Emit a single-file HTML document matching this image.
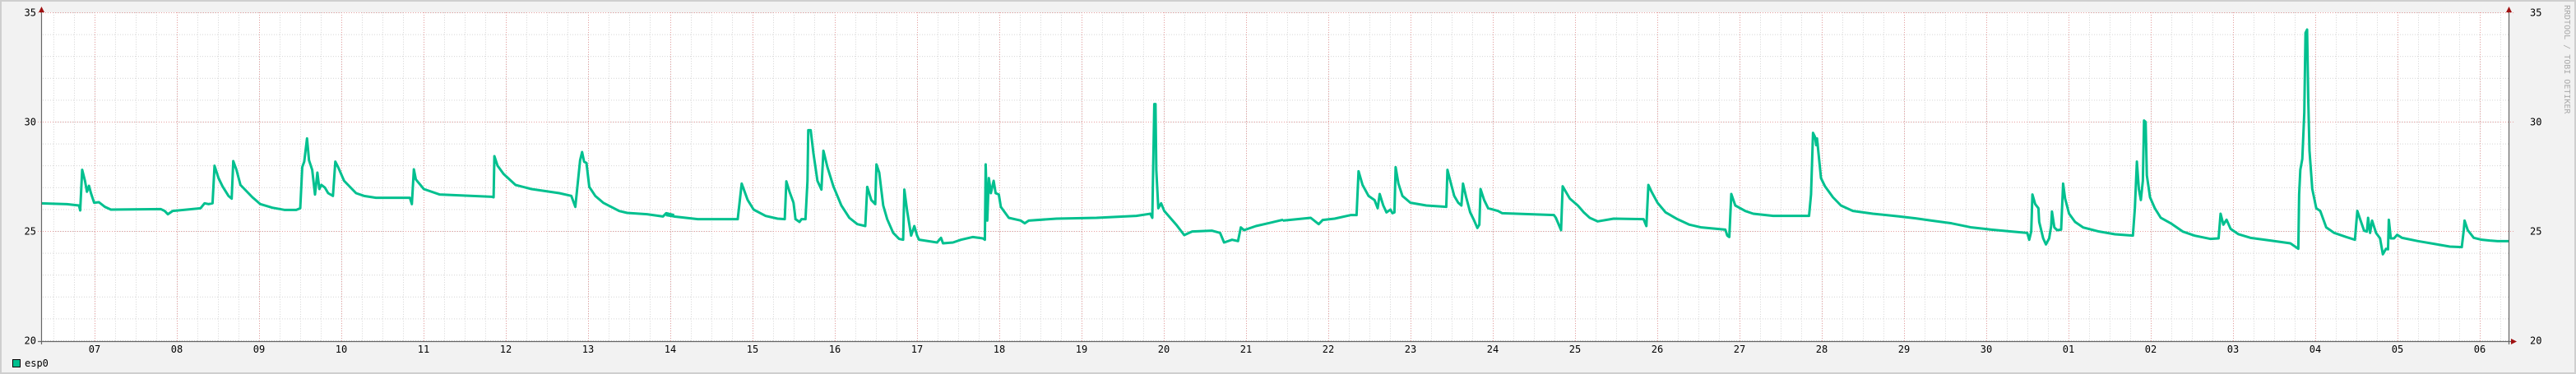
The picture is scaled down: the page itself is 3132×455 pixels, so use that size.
<!DOCTYPE html>
<html><head><meta charset="utf-8"><style>
html,body{margin:0;padding:0;background:#f2f2f2;}
svg{display:block;}
text{font-family:"DejaVu Sans Mono","Liberation Mono",monospace;}
</style></head><body>
<svg width="3132" height="455" viewBox="0 0 3132 455" xmlns="http://www.w3.org/2000/svg">
<defs>
<pattern id="mi" patternUnits="userSpaceOnUse" x="15" y="15" width="25" height="26.6">
<line x1="0.5" y1="0" x2="0.5" y2="26.6" stroke="#d4d4d4" stroke-width="1" stroke-dasharray="1,2"/>
<line x1="0" y1="0.5" x2="25" y2="0.5" stroke="#d4d4d4" stroke-width="1" stroke-dasharray="1,2"/>
</pattern>
<pattern id="ma" patternUnits="userSpaceOnUse" x="15" y="0" width="100" height="455">
<line x1="0.5" y1="0" x2="0.5" y2="455" stroke="#e8a0a0" stroke-width="1" stroke-dasharray="1,2"/>
</pattern>
</defs>
<rect x="0" y="0" width="3132" height="455" fill="#f2f2f2"/>
<rect x="1" y="1" width="3130" height="453" fill="none" stroke="#cfcfcf" stroke-width="2"/>
<rect x="51" y="15" width="2999" height="400" fill="#fff"/>
<rect x="51" y="15" width="2999" height="400" fill="url(#mi)"/>
<rect x="51" y="15" width="2999" height="400" fill="url(#ma)"/>
<g stroke="#e8a0a0" stroke-width="1" stroke-dasharray="1,2">
<line x1="46" y1="15.5" x2="3056" y2="15.5"/>
<line x1="46" y1="148.5" x2="3056" y2="148.5"/>
<line x1="46" y1="281.5" x2="3056" y2="281.5"/>
</g>
<g transform="translate(50,140) scale(0.4847,0.33333)" fill="none" stroke="#00c08f" stroke-width="3" stroke-linejoin="round" vector-effect="non-scaling-stroke">
<polyline vector-effect="non-scaling-stroke" points="0,322 65,325 95,330 98,348 103,200 110,240 115,280 120,258 125,285 133,320 145,318 160,335 175,345 300,343 310,350 318,362 330,350 400,340 410,322 420,325 430,322 435,185 445,230 455,260 470,295 478,305 482,168 490,200 500,255 510,270 530,300 550,325 580,338 610,346 640,346 650,340 655,190 660,170 667,85 672,165 680,200 687,290 693,210 698,270 703,255 712,265 720,285 732,295 738,170 745,190 760,240 790,285 810,295 840,302 925,302 930,325 935,198 940,235 960,270 1000,290 1130,298 1135,300 1137,150 1145,185 1160,215 1190,255 1230,270 1300,285 1330,295 1340,335 1352,165 1357,135 1362,170 1368,175 1375,262 1390,295 1410,320 1450,350 1470,357 1520,362 1560,370 1568,358 1588,365"/>
</g>
<g transform="translate(800,140) scale(0.4847,0.33333)" fill="none" stroke="#00c08f">
<polyline vector-effect="non-scaling-stroke" stroke-width="3" stroke-linejoin="round" points="20,365 40,370 100,380 200,380 210,250 225,310 240,345 270,368 300,378 318,380 322,242 330,280 340,320 345,380 355,390 360,380 370,380 375,240 377,55 383,55 390,140 400,240 410,272 415,130 425,190 440,260 460,330 480,375 500,398 520,405 525,262 535,310 545,325 548,180 555,210 565,330 575,380 590,430 605,452 615,455 618,272 625,350 635,440 643,405 650,440 655,455 700,465 710,448 715,468 740,465 760,455 790,445 815,450 820,455 822,180 826,385 830,230 835,285 842,240 847,285 855,290 860,335 880,375 910,385 920,395 930,385 1000,378 1100,375 1200,368 1235,360 1240,375 1242,205 1245,-40 1248,-40 1250,200 1255,340 1262,322 1270,350 1300,400 1320,438 1340,425 1390,422 1410,430 1420,465 1440,455 1455,460 1462,410 1470,420 1500,405 1530,395 1568,382"/>
</g>
<g transform="translate(1550,140) scale(0.4847,0.33333)" fill="none" stroke="#00c08f">
<polyline vector-effect="non-scaling-stroke" stroke-width="3" stroke-linejoin="round" points="20,385 90,375 110,398 120,383 150,378 190,365 205,365 210,205 220,255 235,295 250,310 258,340 263,288 272,330 280,355 290,345 295,358 300,355 303,190 310,250 320,295 340,320 380,330 430,335 433,200 440,240 450,295 460,320 468,330 472,250 480,300 490,355 500,385 508,412 513,400 516,270 525,310 535,340 560,350 570,358 700,365 705,375 718,420 722,260 730,280 740,305 760,330 775,355 790,375 810,388 850,378 925,380 932,405 937,255 945,280 960,320 980,355 1010,380 1040,400 1070,410 1130,418 1135,440 1140,445 1145,288 1155,330 1180,350 1200,360 1250,368 1340,368 1345,290 1350,65 1355,80 1358,110 1360,85 1370,230 1380,260 1400,300 1420,330 1450,350 1500,360 1568,370"/>
</g>
<g transform="translate(2300,20) scale(0.4847,0.33333)" fill="none" stroke="#00c08f">
<polyline vector-effect="non-scaling-stroke" stroke-width="3" stroke-linejoin="round" points="20,730 60,737 100,745 150,755 200,770 250,778 300,785 340,790 345,815 350,785 353,650 360,685 368,700 370,750 380,810 387,832 395,810 400,765 402,712 408,770 415,780 425,778 430,610 435,665 445,720 460,750 480,770 520,785 560,795 605,800 610,700 615,530 620,630 625,670 630,600 633,380 637,385 640,580 648,660 660,700 675,735 700,755 730,785 760,800 800,812 820,810 825,720 832,760 840,742 850,775 870,795 900,808 950,818 1000,828 1020,848 1022,650 1025,560 1030,520 1035,350 1038,60 1042,48 1045,310 1048,490 1055,630 1065,700 1075,710 1090,770 1110,790 1140,805 1162,815 1168,710 1175,740 1185,782 1192,785 1195,735 1200,790 1205,745 1215,790 1225,810 1232,868 1240,848 1245,850 1247,742 1252,810 1260,810 1268,797 1280,808 1320,820 1360,830 1400,840 1430,842 1435,780 1437,745 1445,780 1460,808 1480,815 1500,818 1520,820 1548,820"/>
</g>
<!-- axes -->
<line x1="50.5" y1="12" x2="50.5" y2="419" stroke="#666" stroke-width="1.2"/>
<line x1="3050.5" y1="12" x2="3050.5" y2="419" stroke="#666" stroke-width="1.2"/>
<line x1="46" y1="415.5" x2="3055" y2="415.5" stroke="#666" stroke-width="1.2"/>
<polygon points="47,15 54,15 50.5,8" fill="#a01010"/>
<polygon points="3047,15 3054,15 3050.5,8" fill="#a01010"/>
<polygon points="3053,412 3053,419 3060,415.5" fill="#a01010"/>
<g font-size="12" fill="#000">
<text x="44" y="19.5" text-anchor="end">35</text>
<text x="44" y="152.5" text-anchor="end">30</text>
<text x="44" y="285.5" text-anchor="end">25</text>
<text x="44" y="418.5" text-anchor="end">20</text>
<text x="3076" y="19.5">35</text>
<text x="3076" y="152.5">30</text>
<text x="3076" y="285.5">25</text>
<text x="3076" y="418.5">20</text>
</g>
<g font-size="12" fill="#000" text-anchor="middle">
<text x="115" y="429">07</text><text x="215" y="429">08</text><text x="315" y="429">09</text><text x="415" y="429">10</text><text x="515" y="429">11</text><text x="615" y="429">12</text><text x="715" y="429">13</text><text x="815" y="429">14</text><text x="915" y="429">15</text><text x="1015" y="429">16</text><text x="1115" y="429">17</text><text x="1215" y="429">18</text><text x="1315" y="429">19</text><text x="1415" y="429">20</text><text x="1515" y="429">21</text><text x="1615" y="429">22</text><text x="1715" y="429">23</text><text x="1815" y="429">24</text><text x="1915" y="429">25</text><text x="2015" y="429">26</text><text x="2115" y="429">27</text><text x="2215" y="429">28</text><text x="2315" y="429">29</text><text x="2415" y="429">30</text><text x="2515" y="429">01</text><text x="2615" y="429">02</text><text x="2715" y="429">03</text><text x="2815" y="429">04</text><text x="2915" y="429">05</text><text x="3015" y="429">06</text>
</g>
<text x="0" y="0" font-size="10" fill="#aaa" transform="translate(3118,6) rotate(90)">RRDTOOL / TOBI OETIKER</text>
<rect x="15.5" y="437.5" width="9" height="9" fill="#00c08f" stroke="#000" stroke-width="1"/>
<text x="30" y="446" font-size="12" fill="#000">esp0</text>
</svg>
</body></html>
